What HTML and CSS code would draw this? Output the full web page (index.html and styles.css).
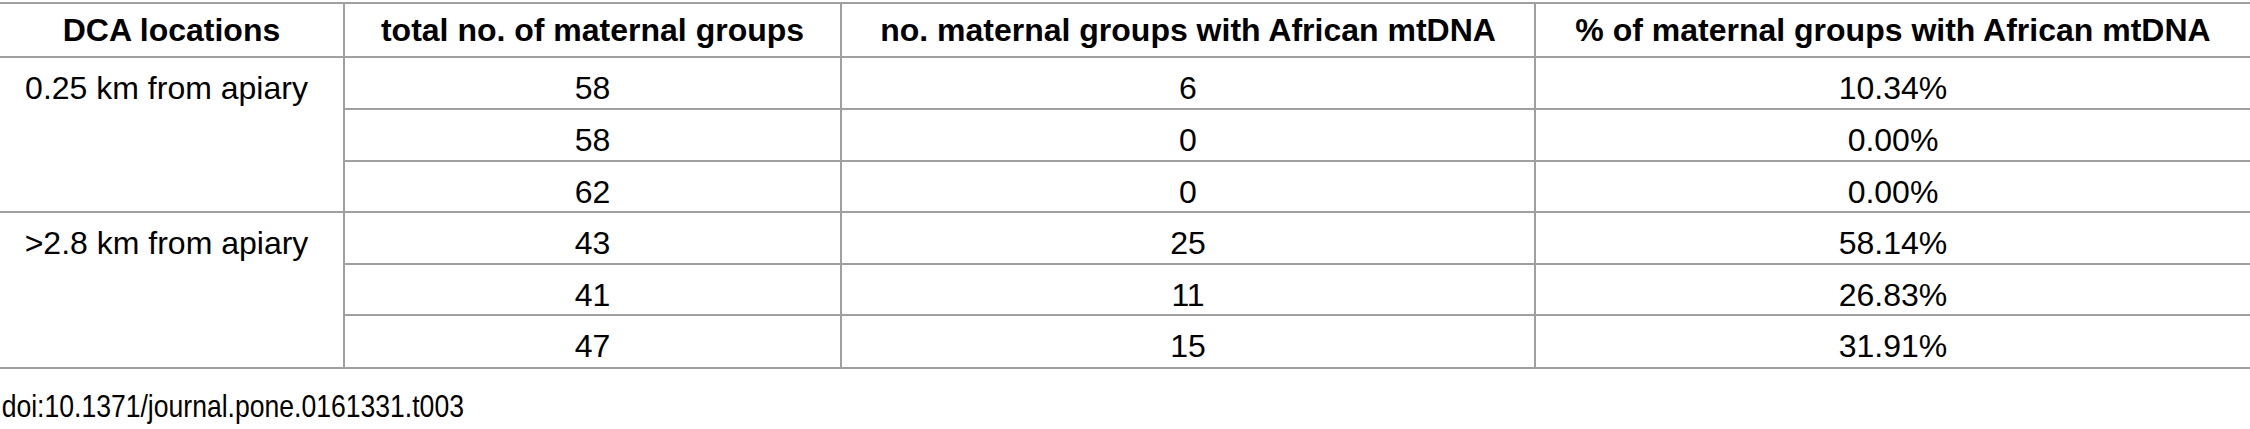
FILE: index.html
```
<!DOCTYPE html>
<html>
<head>
<meta charset="utf-8">
<link rel="stylesheet" href="styles.css">
</head>
<body>
<table class="data">
  <colgroup>
    <col class="c1"><col class="c2"><col class="c3"><col class="c4">
  </colgroup>
  <thead>
    <tr class="head">
      <th class="first">DCA locations</th>
      <th>total no. of maternal groups</th>
      <th>no. maternal groups with African mtDNA</th>
      <th>% of maternal groups with African mtDNA</th>
    </tr>
  </thead>
  <tbody>
    <tr class="r1"><td class="loc" rowspan="3">0.25 km from apiary</td><td>58</td><td>6</td><td>10.34%</td></tr>
    <tr class="r2"><td>58</td><td>0</td><td>0.00%</td></tr>
    <tr class="r3"><td>62</td><td>0</td><td>0.00%</td></tr>
    <tr class="r4"><td class="loc" rowspan="3">&gt;2.8 km from apiary</td><td>43</td><td>25</td><td>58.14%</td></tr>
    <tr class="r5"><td>41</td><td>11</td><td>26.83%</td></tr>
    <tr class="r6"><td>47</td><td>15</td><td>31.91%</td></tr>
  </tbody>
</table>
<div class="doi">doi:10.1371/journal.pone.0161331.t003</div>
</body>
</html>
```
FILE: styles.css
```
html, body {
  margin: 0;
  padding: 0;
  background: #ffffff;
}
body {
  padding-top: 2px;
  font-family: "Liberation Sans", Arial, sans-serif;
  color: #000000;
}
.data {
  border-collapse: separate;
  border-spacing: 0;
  table-layout: fixed;
  width: 2250px;
  font-size: 32px;
}
.c1 { width: 343px; }
.c2 { width: 497px; }
.c3 { width: 694px; }
.c4 { width: 716px; }
.data th, .data td {
  box-sizing: border-box;
  text-align: center;
  padding: 0;
  line-height: 37px;
  border-left: 2px solid #a0a0a0;
  border-bottom: 2px solid #a0a0a0;
}
.data th.first, .data td.loc { border-left: none; }
.data th {
  font-weight: bold;
  height: 56px;
  border-top: 2px solid #a0a0a0;
  vertical-align: middle;
}
.data tbody td {
  font-weight: normal;
  vertical-align: top;
  padding-top: 12px;
}
.data td.loc { padding-right: 10px; }
.r1 td, .r2 td, .r4 td { height: 52px; }
.r3 td, .r5 td { height: 51px; }
.r6 td { height: 53px; }
.doi {
  margin-top: 19px;
  padding-left: 2px;
  font-size: 32px;
  line-height: 37px;
  transform: scaleX(0.83);
  transform-origin: left center;
  white-space: nowrap;
}
```
